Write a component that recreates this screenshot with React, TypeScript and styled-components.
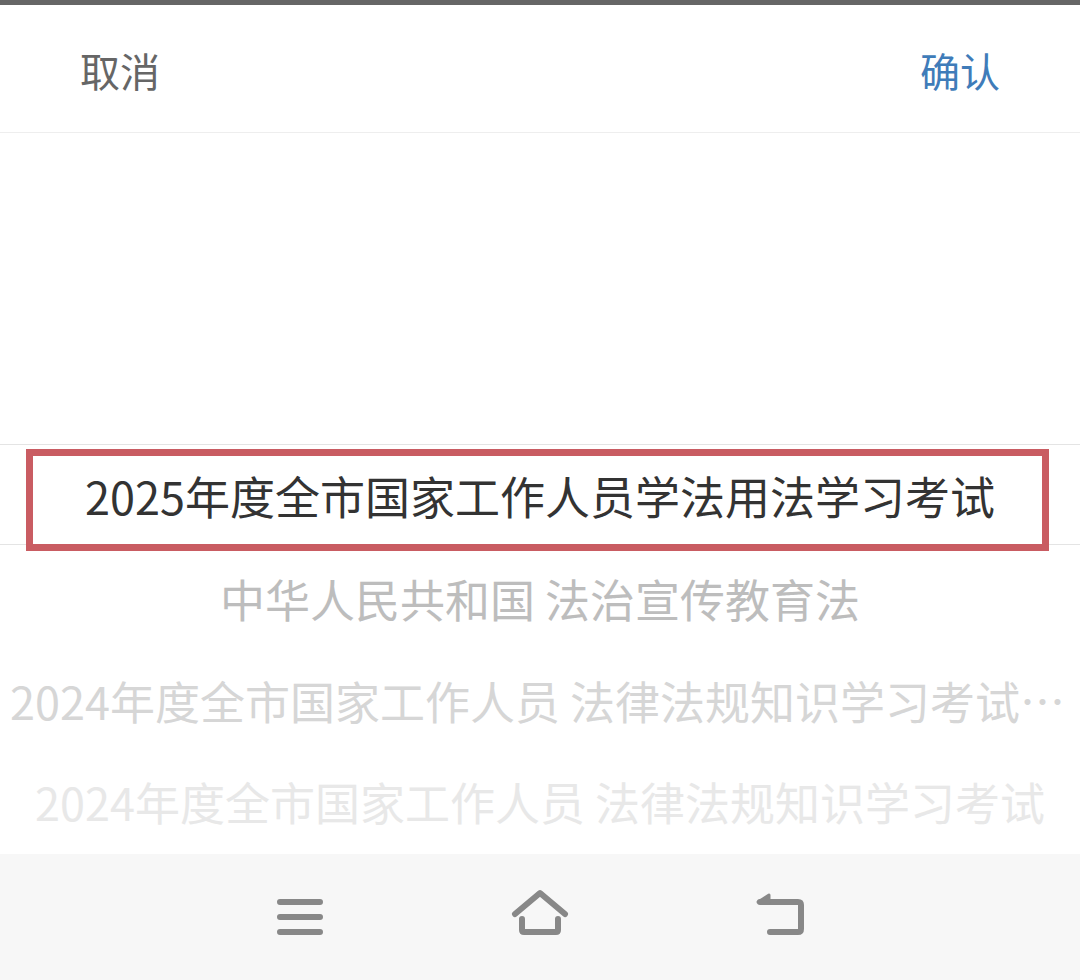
import styled, { createGlobalStyle } from 'styled-components';

const GlobalStyle = createGlobalStyle`
  html, body {
    margin: 0;
    padding: 0;
    background: #fff;
  }
  body {
    font-family: "Noto Sans CJK SC", "Noto Sans", sans-serif;
  }
`;

const Page = styled.div`
  width: 1080px;
  height: 980px;
  display: flex;
  flex-direction: column;
  overflow: hidden;
  background: #fff;
  border-top: 5px solid #666;
  box-sizing: border-box;
`;

const Header = styled.div`
  height: 128px;
  flex: none;
  box-sizing: border-box;
  display: flex;
  align-items: center;
  justify-content: space-between;
  padding: 3px 80px 0;
  border-bottom: 1px solid #eee;
`;

const HeaderButton = styled.span<{ $primary?: boolean }>`
  font-size: 40px;
  line-height: 1;
  color: ${({ $primary }) => ($primary ? '#3f7cb9' : '#666')};
`;

const Picker = styled.div`
  flex: 1;
  padding-top: 311px;
`;

const SelectedRow = styled.div`
  position: relative;
  height: 101px;
  box-sizing: border-box;
  display: flex;
  align-items: center;
  justify-content: center;
  padding-top: 2px;
  border-top: 1px solid #e4e4e4;
  border-bottom: 1px solid #e4e4e4;
  font-size: 45px;
  line-height: 1;
  color: #333;
  white-space: nowrap;
`;

const Highlight = styled.div`
  position: absolute;
  left: 26px;
  top: 4px;
  width: 1023px;
  height: 102px;
  box-sizing: border-box;
  border: 7px solid #c95c62;
`;

const OptionList = styled.div`
  padding-top: 3px;
`;

const Option = styled.div<{ $color: string }>`
  height: 101.5px;
  line-height: 101.5px;
  padding: 0 10px;
  font-size: 45px;
  text-align: center;
  white-space: nowrap;
  overflow: hidden;
  text-overflow: ellipsis;
  color: ${({ $color }) => $color};
`;

const NavBar = styled.div`
  height: 126px;
  flex: none;
  display: flex;
  align-items: center;
  justify-content: center;
  gap: 180px;
  background: #f7f7f7;
`;

const NavIcon = styled.svg`
  width: 60px;
  height: 60px;
  fill: none;
  stroke: #888;
  stroke-width: 6;
  stroke-linecap: round;
  stroke-linejoin: round;
`;

const MenuIcon = () => (
  <NavIcon viewBox="0 0 60 60">
    <path d="M10 15H50M10 30H50M10 45H50" />
  </NavIcon>
);

const HomeIcon = () => (
  <NavIcon viewBox="0 0 60 60">
    <path d="M5 27L30 6L55 27" />
    <path d="M12 32V43Q12 45 14 45H46Q48 45 48 43V32" />
  </NavIcon>
);

const BackIcon = () => (
  <NavIcon viewBox="0 0 60 60">
    <path d="M10 15H48Q51 15 51 18V42Q51 45 48 45H20" />
    <path d="M8 15L19 8V15Z" fill="#888" strokeWidth="3" />
  </NavIcon>
);

export default function App() {
  return (
    <>
      <GlobalStyle />
      <Page lang="zh-CN">
        <Header>
          <HeaderButton>取消</HeaderButton>
          <HeaderButton $primary>确认</HeaderButton>
        </Header>
        <Picker>
          <SelectedRow>
            2025年度全市国家工作人员学法用法学习考试
            <Highlight />
          </SelectedRow>
          <OptionList>
            <Option $color="#bdbdbd">中华人民共和国 法治宣传教育法</Option>
            <Option $color="#d6d6d6">2024年度全市国家工作人员 法律法规知识学习考试（全市统一考试）</Option>
            <Option $color="#e8e8e8">2024年度全市国家工作人员 法律法规知识学习考试</Option>
          </OptionList>
        </Picker>
        <NavBar>
          <MenuIcon />
          <HomeIcon />
          <BackIcon />
        </NavBar>
      </Page>
    </>
  );
}
